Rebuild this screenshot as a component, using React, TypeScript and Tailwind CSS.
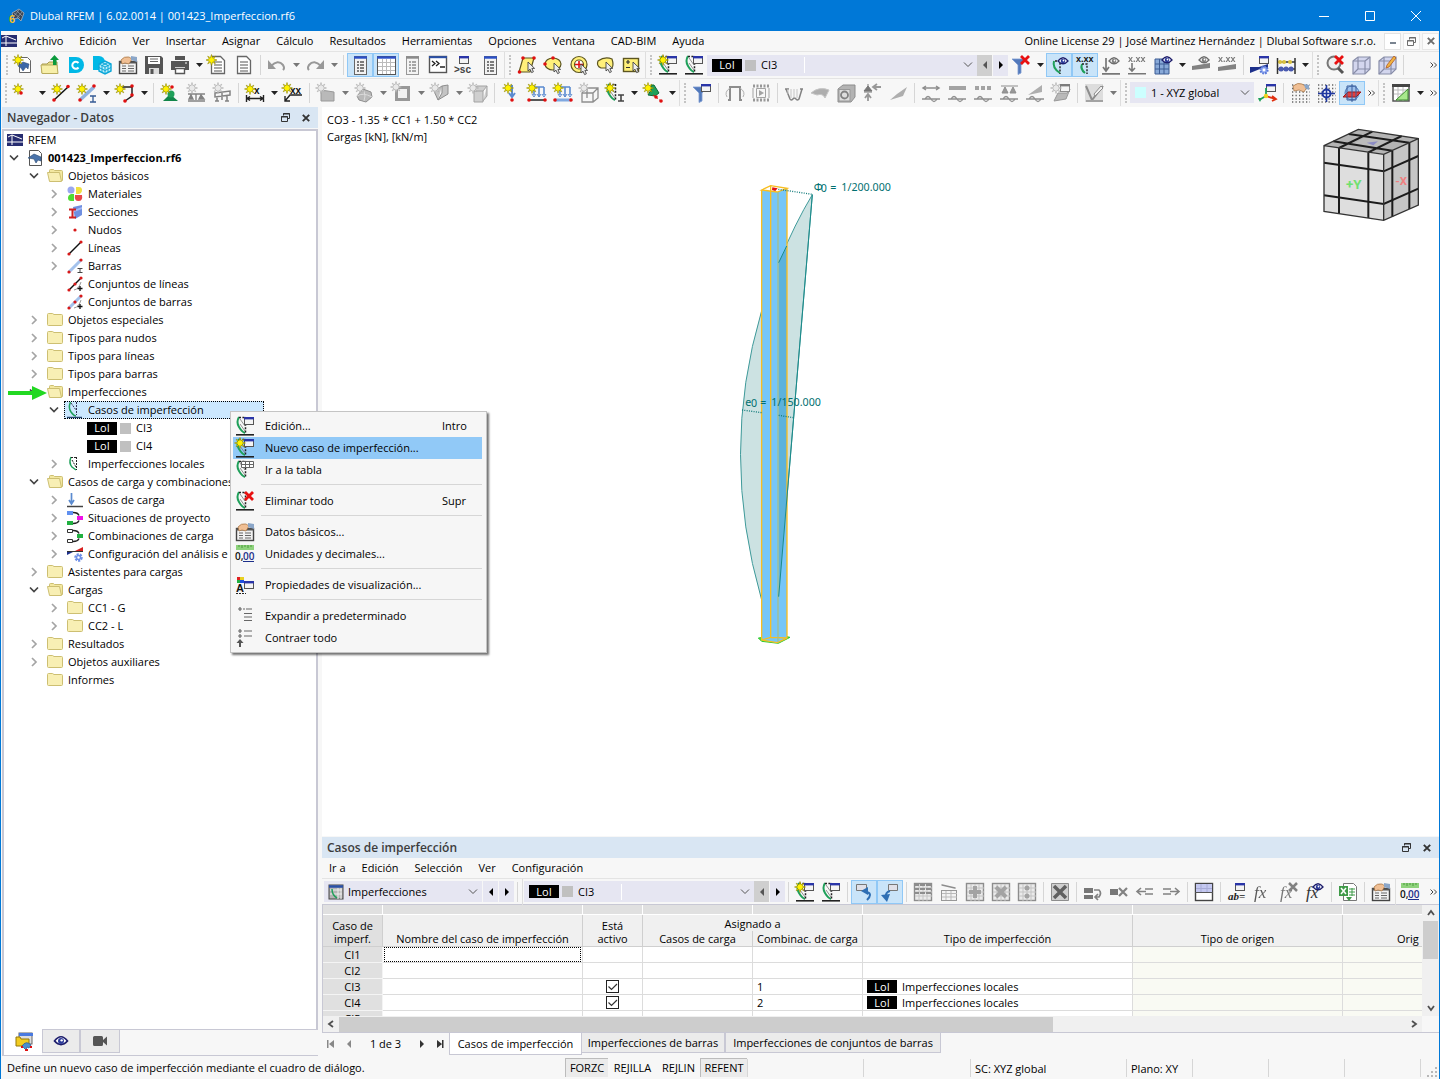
import type { ReactNode } from "react";

/* ---------- Icon parts ---------- */

type Point = { x: number; y: number };

const Star = ({ x, y }: Point) => (
  <path
    transform={`translate(${x} ${y})`}
    d="M0-5.5 1-2.2 3.8-3.8 2.2-1 5.5 0 2.2 1 3.8 3.8 1 2.2 0 5.5-1 2.2-3.8 3.8-2.2 1-5.5 0-2.2-1-3.8-3.8-1-2.2z"
    fill="#fff200"
    stroke="#8f8500"
    strokeWidth=".6"
  />
);

const Win = ({ x, y }: Point) => (
  <g transform={`translate(${x} ${y})`}>
    <rect x=".5" y=".5" width="9" height="7" fill="#f4f4f4" stroke="#555" />
    <path d="M0 1.2h10" stroke="#2a35a8" strokeWidth="2.4" />
  </g>
);

const Dot = ({ x, y }: Point) => <circle cx={x} cy={y} r="1.8" fill="#e01010" />;

const Cursor = ({ x, y }: Point) => (
  <path
    transform={`translate(${x} ${y})`}
    d="M0 0v9l2-1.8 1.6 3.4 1.8-.8L3.9 6.4h2.7z"
    fill="#eee"
    stroke="#444"
    strokeWidth=".9"
  />
);

const Eye = ({ x, y }: Point) => (
  <g transform={`translate(${x} ${y})`}>
    <path d="M-5 0Q0-6.5 5 0 0 5.5-5 0z" fill="#fff" stroke="#1d1d6b" strokeWidth="1.3" />
    <circle r="2.3" fill="#2a3a9a" />
    <circle r=".9" cx=".5" cy="-.5" fill="#fff" />
  </g>
);

const RedX = ({ x, y }: Point) => (
  <path
    transform={`translate(${x} ${y})`}
    d="M-4-4 4 4M4-4-4 4"
    stroke="#e81010"
    strokeWidth="2.8"
    fill="none"
  />
);

const Gear = ({ x, y }: Point) => (
  <g transform={`translate(${x} ${y})`}>
    <circle r="3.6" fill="#8fa8f0" stroke="#5a78d8" strokeWidth="2" strokeDasharray="1.6 1.2" />
    <circle r="1.4" fill="#fff" />
  </g>
);

const bow = (
  <g fill="none">
    <path d="M6 3Q3 8 6 13t6 6" stroke="#1fa05a" strokeWidth="2" />
    <path d="M6 3.5h7M12.5 3v16" stroke="#222" strokeWidth="1.5" strokeDasharray="2 1.4" />
    <path d="M7 5l5 7M7 10l5 7" stroke="#777" strokeWidth=".8" />
  </g>
);
const bowBase = <path d="M3 20.8h18" stroke="#222" strokeWidth="1.6" />;
const sheet = (
  <path d="M5.5 3.5h9l4 4v13h-13z" fill="#fff" stroke="#666" strokeWidth="1.3" />
);
const sheetLines = <path d="M8 9h8M8 12h8M8 15h8M8 18h8" stroke="#555" strokeWidth="1.2" />;
const handCard = (
  <g>
    <rect x="3.5" y="8.5" width="17" height="12" fill="#f2f2f2" stroke="#444" strokeWidth="1.4" />
    <path d="M3 9.5h18" stroke="#555" strokeWidth="2" />
    <path d="M6 13h4M12 13h6M6 15.5h4M12 15.5h6M6 18h4M12 18h6" stroke="#666" />
    <path d="M5 7q3-4 8-3l3 2-3 5-4-1-3 1z" fill="#f0bf94" stroke="#a0703f" strokeWidth=".7" />
    <path d="M15 3l6 1v5l-6-2z" fill="#8ba6c8" />
  </g>
);
const cubeLines = (
  <g strokeWidth="1.2">
    <path d="M4 8l5-4h12v12l-5 5H4z" fill="#d3d6ee" stroke="#888da8" />
    <path d="M4 8h12v13M16 8l5-4M9 4v12l-5 5M9 16h12" fill="none" stroke="#888da8" />
  </g>
);
const dots = (
  <path
    d="M4 4h18M4 7.5h18M4 11h18M4 14.5h18M4 18h18M4 21h18"
    stroke="#666"
    strokeWidth="1.3"
    strokeDasharray="1.3 2.2"
  />
);
const funnel = <path d="M3 6h15l-6 6v8l-3 1.5V12z" fill="#5279bb" stroke="#7c9ad0" strokeWidth=".8" />;
const wave = <path d="M3 18h3q3-5 6 0t6 0h3M3 18h18" fill="none" stroke="#555" strokeWidth="1.3" />;
const undoArrow = (
  <g>
    <path d="M6 13q7-7 12-1 2 3 0 5" fill="none" stroke="#666" strokeWidth="2" />
    <path d="M3 7v9h8z" fill="#666" />
  </g>
);
const fx = (
  <text x="3" y="18" fontFamily="Liberation Serif" fontStyle="italic" fontSize="17" fill="#333">
    fx
  </text>
);
const loadFrame = (
  <g fill="none">
    <path d="M9 6h10M9 6v8M14 6v10M19 6v8" stroke="#5b8bd0" strokeWidth="1.6" />
    <path d="M7 13l2 3 2-3M12 13l2 3 2-3M17 13l2 3 2-3" stroke="#5b8bd0" />
  </g>
);
const cellGrid = (
  <g>
    <rect x="3.5" y="3.5" width="17" height="17" fill="#e4e4e4" stroke="#555" strokeWidth="1.4" />
    <path d="M4 8h17M4 12h17M4 16h17M8 4v17M12 4v17M16 4v17" stroke="#aaa" />
  </g>
);

/* ---------- Toolbar icons, 24 x 24 ---------- */

const icons: Record<string, ReactNode> = {
  newModel: (
    <>
      <path d="M7.5 4.5h8l3 3v12h-11z" fill="#fff" stroke="#666" />
      <path d="M6 13l5-4 6 2-1 5-2-2-3 4-2-3z" fill="#3c68a8" stroke="#28456f" strokeWidth=".5" />
      <Star x={6} y={7} />
    </>
  ),
  open: (
    <>
      <path d="M4 11h5l2-2h8v11H4z" fill="#e8dc8c" stroke="#a89b4e" />
      <path d="M3 12h16l1 8.5H4z" fill="#f7efa9" stroke="#b9ac5c" />
      <path d="M15 12V7h-3l4.5-5L21 7h-2.500v5z" fill="#0a9a3c" />
    </>
  ),
  cloud: (
    <>
      <path d="M5 4h7a8 8 0 010 16H5z" fill="#00b8e6" />
      <path d="M14.5 10a3.5 3.5 0 100 4.500" fill="none" stroke="#fff" strokeWidth="2" />
    </>
  ),
  cloudModel: (
    <>
      <path d="M3 3h6a6 6 0 016 6l-3 8H3z" fill="#00b8e6" />
      <path d="M9 11l6-3 6 3v7l-6 3-6-3z" fill="#bdeefa" stroke="#0aa6d8" strokeWidth="1.4" />
      <path
        d="M9 11l6 3 6-3M15 14v7M12 9.5l6 3M12 19.5v-7l6-3M9 14.5l6 3 6-3M18 12.500v7"
        fill="none"
        stroke="#0aa6d8"
      />
    </>
  ),
  basicData: handCard,
  save: (
    <>
      <path d="M3 3h16l2 2v16H3z" fill="#555" />
      <path d="M6 4h12v7H6z" fill="#fff" />
      <path d="M8 6h8M8 8.500h8" stroke="#666" />
      <path d="M7 15h10v6H7z" fill="#ddd" />
      <path d="M8.500 16h3v5h-3z" fill="#555" />
    </>
  ),
  print: (
    <>
      <path d="M7 3h10v4H7zM3 8h18v9h-4v-3H7v3H3z" fill="#555" />
      <path d="M7.500 15.500h9v5h-9z" fill="#fff" stroke="#555" strokeWidth="1.4" />
      <path d="M17 10h2" stroke="#fff" />
    </>
  ),
  newReport: (
    <>
      {sheet}
      {sheetLines}
      <Star x={5.5} y={7} />
    </>
  ),
  report: (
    <>
      {sheet}
      {sheetLines}
    </>
  ),
  undo: undoArrow,
  redo: <g transform="matrix(-1 0 0 1 24 0)">{undoArrow}</g>,
  navPanel: (
    <>
      <rect x="6.5" y="3.5" width="12" height="18" fill="#f2f2f2" stroke="#666" />
      <path d="M6 4.500h13" stroke="#2a50c8" strokeWidth="2.400" />
      <path
        d="M9 9h2M12 9h4M9 12h2M12 12h4M9 15h2M12 15h4M9 18h2M12 18h4"
        stroke="#555"
        strokeWidth="1.500"
      />
    </>
  ),
  tablePanel: (
    <>
      <rect x="3.5" y="3.5" width="18" height="18" fill="#fff" stroke="#555" />
      <path d="M3 4.500h19" stroke="#2a50c8" strokeWidth="2.400" />
      <path d="M4 9.500h17M4 13.500h17M4 17.500h17M8.500 6v15M12.500 6v15M16.500 6v15" stroke="#bbb" />
    </>
  ),
  console: (
    <>
      <rect x="3.5" y="3.5" width="17" height="16" fill="#fff" stroke="#555" strokeWidth="1.400" />
      <path d="M3 4.200h18" stroke="#2a50a8" strokeWidth="2" />
      <path d="M6 8l3 2.500L6 13M10 8l3 2.500-3 2.500M14 14h5" fill="none" stroke="#222" strokeWidth="1.300" />
    </>
  ),
  script: (
    <>
      <Win x={7} y={3} />
      <text x="2" y="20" fontFamily="Liberation Sans" fontWeight="bold" fontSize="10" fill="#444">
        &gt;sc
      </text>
    </>
  ),
  selPoly: (
    <>
      <path d="M8 5h11l-4 14H4z" fill="#fff07a" stroke="#5c5520" strokeWidth="1.200" />
      <Dot x={8} y={5} />
      <Dot x={19} y={5} />
      <Dot x={4.5} y={19} />
      <Cursor x={13} y={9} />
    </>
  ),
  selEllipse: (
    <>
      <ellipse cx="12" cy="11" rx="8" ry="6" fill="#fff07a" stroke="#5c5520" strokeWidth="1.200" />
      <Dot x={12} y={5} />
      <Dot x={4} y={11} />
      <Cursor x={13} y={10} />
    </>
  ),
  selRing: (
    <>
      <circle cx="12" cy="11.5" r="8" fill="#fff07a" stroke="#5c5520" strokeWidth="1.200" />
      <circle cx="12" cy="11.5" r="4.500" fill="#fff" stroke="#5c5520" strokeWidth="1.200" />
      <path d="M8 11.500h8M12 8v7" stroke="#e01010" strokeWidth="1.600" />
      <Cursor x={14} y={11} />
    </>
  ),
  selLasso: (
    <>
      <path d="M5 8q7-5 14-2 2 6 0 9H8q-5-2-3-7z" fill="#fff07a" stroke="#5c5520" strokeWidth="1.200" />
      <Cursor x={13} y={9} />
    </>
  ),
  selPlus: (
    <>
      <rect x="4.500" y="5.500" width="15" height="13" fill="#fff07a" stroke="#5c5520" strokeWidth="1.400" />
      <path d="M7 9h4M9 7v4M7 14.500h4" stroke="#333" strokeWidth="1.200" />
      <Cursor x={14} y={9} />
    </>
  ),
  newImp: (
    <>
      {bow}
      {bowBase}
      <Win x={11} y={3} />
      <Star x={7} y={7} />
    </>
  ),
  editImp: (
    <>
      {bow}
      {bowBase}
      <Win x={11} y={3} />
    </>
  ),
  tableImp: (
    <>
      {bow}
      <path d="M8.500 3.500h12v6h-12zM8 6.500h12M12.500 3v7M16.500 3v7" fill="#fff" stroke="#666" />
    </>
  ),
  deleteImp: (
    <>
      {bow}
      {bowBase}
      <RedX x={16} y={7} />
    </>
  ),
  filterOff: (
    <>
      {funnel}
      <RedX x={16} y={7} />
    </>
  ),
  filterWin: (
    <>
      {funnel}
      <Win x={11} y={3} />
    </>
  ),
  eyeImp: (
    <>
      <path d="M7 8q-2 7 6 12" fill="none" stroke="#1fa05a" strokeWidth="2" />
      <path d="M8 8h5v13" fill="none" stroke="#222" strokeWidth="1.400" strokeDasharray="2 1.400" />
      <Eye x={16} y={8} />
    </>
  ),
  valuesImp: (
    <>
      <text x="3" y="9" fontFamily="Liberation Sans" fontWeight="bold" fontSize="9" fill="#111">
        x.xx
      </text>
      <path d="M9 11q-2 5 3 9" fill="none" stroke="#1fa05a" strokeWidth="2" />
      <path d="M9 11h5v10" fill="none" stroke="#222" strokeWidth="1.400" strokeDasharray="2 1.400" />
    </>
  ),
  eyeLoad: (
    <>
      <path d="M7 5v12M4 14l3 4 3-4M3 20.800h18" fill="none" stroke="#333" strokeWidth="1.700" />
      <Eye x={15} y={8} />
    </>
  ),
  valuesLoad: (
    <>
      <text x="3" y="9" fontFamily="Liberation Sans" fontWeight="bold" fontSize="9" fill="#333">
        x.xx
      </text>
      <path d="M7 10v8M4 15l3 3 3-3M3 20.800h18" fill="none" stroke="#333" strokeWidth="1.600" />
    </>
  ),
  eyeGrid: (
    <>
      <path d="M4 6h14v15H4z" fill="#88a9d8" stroke="#3c5c94" />
      <path d="M4 11h14M4 16h14M8.500 6v15M13 6v15" stroke="#3c5c94" />
      <Eye x={16} y={7} />
    </>
  ),
  eyeResult: (
    <>
      <path d="M3 13v4l18-2v-5z" fill="#444" />
      <Eye x={15} y={7} />
    </>
  ),
  valuesResult: (
    <>
      <text x="3" y="9" fontFamily="Liberation Sans" fontWeight="bold" fontSize="9" fill="#333">
        x.xx
      </text>
      <path d="M3 14v4l18-2v-5z" fill="#444" />
    </>
  ),
  analysis: (
    <>
      <path d="M2 14h9l9-3v4l-8 1-10 4z" fill="#1c2f8a" />
      <Win x={11} y={3} />
      <Gear x={16} y={17} />
    </>
  ),
  abacus: (
    <>
      <path d="M3.500 5v16M21 5v16M3 9h18M3 16h18" stroke="#333" strokeWidth="1.500" />
      <path d="M6 9h.1M10 9h.1M16 9h.1" stroke="#d8c040" strokeWidth="4" strokeLinecap="round" />
      <path d="M7 16h.1M12 16h.1M17 16h.1" stroke="#4a5ab0" strokeWidth="5" strokeLinecap="round" />
    </>
  ),
  zoomOff: (
    <>
      <circle cx="11" cy="10" r="6.500" fill="#eee" stroke="#777" strokeWidth="2" />
      <path d="M15 15l5 5" stroke="#555" strokeWidth="3" />
      <RedX x={16} y={7} />
    </>
  ),
  cube: cubeLines,
  cubeEdit: (
    <>
      {cubeLines}
      <path d="M12 12l7-9 2 2-7 9-3 1z" fill="#f0b440" stroke="#b05a28" strokeWidth=".8" />
    </>
  ),
  node: (
    <>
      <Star x={7} y={8} />
      <Dot x={10} y={12} />
    </>
  ),
  line: (
    <>
      <path d="M5 19L19 6" stroke="#111" strokeWidth="1.500" />
      <Dot x={5} y={19} />
      <Dot x={19} y={5.5} />
      <Star x={8} y={8} />
    </>
  ),
  member: (
    <>
      <path d="M5 19L19 6" stroke="#8fb2e0" strokeWidth="3.500" />
      <Dot x={5} y={19} />
      <Dot x={19} y={5} />
      <path d="M15 15h6M18 15v6M15 21h6" stroke="#345a94" strokeWidth="1.300" />
      <Star x={7} y={8} />
    </>
  ),
  lineSet: (
    <>
      <path d="M9 6h10v9L12 20" fill="none" stroke="#222" strokeWidth="1.500" />
      <Dot x={19} y={5} />
      <Dot x={19} y={14} />
      <Dot x={12} y={20} />
      <Star x={7} y={8} />
    </>
  ),
  support: (
    <>
      <path d="M5 20l7-7 8 7z" fill="#12864a" />
      <circle cx="13" cy="13" r="3.500" fill="#1fa05a" />
      <Dot x={14} y={6} />
      <Star x={8} y={8} />
    </>
  ),
  lineSupport: (
    <>
      <path
        d="M4 13h17M7 14l-2 4h4zM17 14l-2 4h5zM12 13v6M4 20h17"
        fill="#444"
        stroke="#444"
        strokeWidth="1.400"
      />
      <Star x={8} y={7} />
    </>
  ),
  hinge: (
    <>
      <path
        d="M5 12l15-2v4L5 16zM7 15v5M17 14v6M5 20h4M15 20h4M12 12v7"
        fill="none"
        stroke="#444"
        strokeWidth="1.500"
      />
      <Star x={8} y={7} />
    </>
  ),
  dimX: (
    <>
      <path
        d="M3.500 14v7M20.500 14v7M4 17.500h16M7 15.500l-3 2 3 2M17 15.500l3 2-3 2"
        fill="none"
        stroke="#222"
        strokeWidth="1.400"
      />
      <text x="11" y="13" fontFamily="Liberation Sans" fontWeight="bold" fontSize="10" fill="#111">
        x
      </text>
      <Star x={7} y={8} />
    </>
  ),
  dimXX: (
    <>
      <path d="M4 20l5-6h12M4 15v5h5" fill="none" stroke="#222" strokeWidth="1.400" />
      <text x="9" y="13" fontFamily="Liberation Sans" fontWeight="bold" fontSize="10" fill="#111">
        xx
      </text>
      <Star x={6} y={7} />
    </>
  ),
  surface: (
    <>
      <path d="M7 9l13 2v9H7z" fill="#999" stroke="#666" />
      <Star x={7} y={7} />
    </>
  ),
  shell: (
    <>
      <path d="M5 15l6-7 8 3 1 5-6 5-7-2z" fill="#999" stroke="#555" />
      <path d="M5 15q6-4 15 1M12 10q2 5 0 10" fill="none" stroke="#ccc" />
      <Star x={8} y={7} />
    </>
  ),
  opening: (
    <>
      <path d="M6.500 6.500h12v12h-12z" fill="#eee" stroke="#666" strokeWidth="3" />
      <Star x={6} y={6} />
    </>
  ),
  solid: (
    <>
      <path d="M6 10l4 9 4-7V5zM14 5l6-1v9l-10 6" fill="#aaa" stroke="#555" />
      <Star x={7} y={7} />
    </>
  ),
  solidBox: (
    <>
      <path d="M8 10h9v11H8zM8 10l3-5h10l-4 5M21 5v10l-4 5" fill="#bbb" stroke="#777" />
      <Star x={7} y={7} />
    </>
  ),
  nodalLoad: (
    <>
      <path d="M13 4v11M10 12l3 4 3-4" fill="none" stroke="#5b8bd0" strokeWidth="2" />
      <Dot x={13} y={19} />
      <Star x={9} y={7} />
    </>
  ),
  lineLoad: (
    <>
      {loadFrame}
      <path d="M4 19h16" stroke="#222" strokeWidth="1.500" />
      <Dot x={4} y={19} />
      <Dot x={20} y={19} />
      <Star x={7} y={7} />
    </>
  ),
  memberLoad: (
    <>
      {loadFrame}
      <path d="M4 19h16" stroke="#7fa8e0" strokeWidth="3" />
      <Dot x={4} y={19} />
      <Dot x={20} y={19} />
      <Star x={7} y={7} />
    </>
  ),
  freeLoad: (
    <>
      <path
        d="M5 12l5-5h11v10l-5 4H5zM5 12h11v9M16 12l5-5M10 7v10"
        fill="none"
        stroke="#555"
        strokeWidth="1.300"
      />
      <Star x={7} y={7} />
    </>
  ),
  memberImp: (
    <>
      {bow}
      <path d="M15 14h6M18 14v6M15 20h6" stroke="#444" strokeWidth="1.600" />
      <Star x={7} y={7} />
    </>
  ),
  guide: (
    <>
      <path d="M10 4l3 0 5 8-4 3-7-1 3-5z" fill="#1fa05a" stroke="#0e6a38" />
      <path d="M12 14l8 6" stroke="#e01010" strokeDasharray="2 2" />
      <Dot x={15} y={16} />
      <Dot x={20} y={20} />
      <Star x={7} y={7} />
    </>
  ),
  portal: (
    <>
      <path d="M7 19V6h10v13M5 19h3M16 19h3" fill="none" stroke="#555" strokeWidth="2" />
      <path d="M7 7q-6 4-3 9M17 7q6 4 3 9" fill="none" stroke="#888" />
    </>
  ),
  film: (
    <>
      <path d="M4 5h17M4 19h17" stroke="#666" strokeWidth="3" strokeDasharray="2 1.500" />
      <path d="M7.500 7.500h9v9h-9zM4 7v10M20 7v10" fill="none" stroke="#777" />
      <path d="M10 9l5 3-5 3z" fill="#777" />
    </>
  ),
  moment: (
    <>
      <path d="M3 8h4M18 8h3M4 8l4 10q1 2 3 0 1-2 3 0 1 2 3 0l3-10" fill="none" stroke="#444" strokeWidth="1.500" />
      <path d="M6 8v5M9 8v9M12 8v9M15 8v9" stroke="#aaa" />
    </>
  ),
  contour: <path d="M3 12q8-7 18-3l-4 8q-2-5-8-3z" fill="#888" stroke="#aaa" />,
  cubeRes: (
    <>
      <path d="M4 8l5-4h12v12l-4 5H4z" fill="#909090" stroke="#555" />
      <path d="M5 8.500h11V20H5z" fill="#d2d2d2" stroke="#666" />
      <circle cx="10.500" cy="14" r="3.500" fill="none" stroke="#444" strokeWidth="1.800" />
    </>
  ),
  reaction: (
    <>
      <path d="M4 10l4-5 4 5zM8 3v3M4 11h8" fill="#333" stroke="#333" />
      <path d="M8 20v-6M5 17l3-4 3 4M21 6h-7M17 3l-4 3 4 3" fill="none" stroke="#666" strokeWidth="1.800" />
    </>
  ),
  ramp: <path d="M4 19l7-6 10-7-4 9z" fill="#888" />,
  result1: (
    <>
      <path d="M4 7h16M7 5L4 7l3 2M17 5l3 2-3 2" fill="none" stroke="#555" strokeWidth="1.500" />
      {wave}
    </>
  ),
  result2: (
    <>
      <path d="M4 7h17" stroke="#777" strokeWidth="4" />
      {wave}
    </>
  ),
  result3: (
    <>
      <path d="M4 7h17" stroke="#777" strokeWidth="4" strokeDasharray="4 2" />
      {wave}
    </>
  ),
  result4: (
    <>
      <path d="M4 5h17M5 12l3-6 3 6zM13 12l3-6 3 6z" fill="#666" stroke="#555" />
      {wave}
    </>
  ),
  result5: (
    <>
      <path d="M5 14L19 4v7z" fill="#888" />
      {wave}
    </>
  ),
  result6: (
    <>
      <path d="M5 20l4-8h9l3-4-4 10z" fill="#999" stroke="#666" />
      <Win x={11} y={3} />
      <Star x={7} y={7} />
    </>
  ),
  design: (
    <>
      <path d="M3 3h18v18H3z" fill="#d0d0d0" />
      <path d="M4 5l6 14L21 5" fill="none" stroke="#555" strokeWidth="2" />
      <path d="M12 13l7-8 2 2-8 8z" fill="#eee" stroke="#555" />
      <path d="M4 20h17" stroke="#777" strokeWidth="2" />
    </>
  ),
  axes: (
    <>
      <Win x={11} y={3} />
      <path d="M11 7v8l-7 4" fill="none" stroke="#1fa05a" strokeWidth="1.800" />
      <path d="M11 15l9 3M17 15l4 3-4 2" fill="none" stroke="#e03010" strokeWidth="1.800" />
      <path d="M3 17l4 0-2 4z" fill="#1fa05a" />
      <circle cx="11" cy="15" r="2.200" fill="#f0d020" />
    </>
  ),
  gridHand: (
    <>
      {dots}
      <path d="M5 5q5-4 9-2l5 3-3 5-5-2-5 1z" fill="#f0bf94" stroke="#a0703f" strokeWidth=".7" />
      <path d="M16 3l5 1v5l-4-2z" fill="#8ba6c8" />
    </>
  ),
  gridSnap: (
    <>
      {dots}
      <circle cx="12.500" cy="12.500" r="4" fill="#fff" stroke="#2038a0" strokeWidth="2" />
      <path d="M12.500 4v17M4 12.500h17" stroke="#2038a0" strokeWidth="1.600" />
    </>
  ),
  workPlane: (
    <>
      <circle cx="12" cy="12" r="7" fill="#9cc0ec" stroke="#4a78b8" />
      <path d="M3 16l5-5h13l-5 5z" fill="#e04040" stroke="#a01818" />
      <path d="M12 3v18M7 5h9v14H7z" fill="none" stroke="#3a5f9c" />
    </>
  ),
  ruler: (
    <>
      <rect x="4" y="4" width="16" height="16" fill="#fff" stroke="#555" strokeWidth="1.500" />
      <path d="M3 4.500h18" stroke="#444" strokeWidth="3" />
      <path d="M5 9h14M5 13h14M9 6v14M14 6v14" stroke="#bbb" />
      <path d="M19 8v11H7z" fill="#a8e88c" stroke="#3f8a30" />
    </>
  ),
  syncIn: (
    <>
      <path d="M4.500 4.500h10v6h-10z" fill="#e0e0e8" stroke="#777" />
      <path d="M15 20q6-6 0-8l-2-1" fill="none" stroke="#2f6fb4" strokeWidth="2" />
      <path d="M9 11l7-4v8z" fill="#2f6fb4" />
    </>
  ),
  syncOut: (
    <>
      <path d="M10.500 4.500h9v6h-9z" fill="#e0e0e8" stroke="#777" />
      <path d="M12 11q-5 1-4 7" fill="none" stroke="#2f6fb4" strokeWidth="2" />
      <path d="M3 15l9-1-3 8z" fill="#2f6fb4" />
    </>
  ),
  tblHeader: (
    <>
      {cellGrid}
      <path d="M3 5h18M3 9h18M3 13h18" stroke="#555" strokeWidth="2" strokeDasharray="5 1" />
    </>
  ),
  tblGraph: (
    <>
      <rect x="4.500" y="10.500" width="15" height="10" fill="#f2f2f2" stroke="#666" />
      <path d="M5 13.500h15M9 11v9M14 11v9M5 17h15" stroke="#999" />
      <path d="M5 5l13 3M5 5h.1M18 8h.1" stroke="#555" strokeLinecap="round" strokeWidth="1.500" />
    </>
  ),
  tblPlus: (
    <>
      {cellGrid}
      <path d="M12 6v12M6 12h12" stroke="#777" strokeWidth="4" />
    </>
  ),
  tblCross: (
    <>
      {cellGrid}
      <path d="M7 7l10 10M17 7L7 17" stroke="#777" strokeWidth="4" />
    </>
  ),
  tblDots: (
    <>
      {cellGrid}
      <circle cx="12" cy="8" r="2.500" fill="#777" />
      <circle cx="12" cy="16" r="2.500" fill="#777" />
    </>
  ),
  tblClear: (
    <>
      <path d="M3.500 3.500h17v17h-17z" fill="#bbb" stroke="#555" />
      <path d="M6 6l12 12M18 6L6 18" stroke="#111" strokeWidth="3.500" />
    </>
  ),
  rowInsert: (
    <>
      <path d="M3 8h9v5H3zM3 15h9v4H3z" fill="#333" />
      <path d="M13 10h5q3 3 0 7h-4M17 14l-3 3 3 3" fill="none" stroke="#444" strokeWidth="1.700" />
    </>
  ),
  rowDelete: (
    <>
      <path d="M3 9h8v6H3z" fill="#333" />
      <path d="M12 8l8 8M20 8l-8 8" stroke="#444" strokeWidth="2.200" />
    </>
  ),
  rowLeft: (
    <path d="M20 9h-8M20 14h-8M13 11.500H4M8 8l-4 3.500L8 15" fill="none" stroke="#444" strokeWidth="1.600" />
  ),
  rowRight: (
    <path d="M4 9h8M4 14h8M11 11.500h9M16 8l4 3.500-4 3.500" fill="none" stroke="#444" strokeWidth="1.600" />
  ),
  split: (
    <>
      <rect x="3.500" y="3.500" width="17" height="17" fill="#fff" stroke="#444" strokeWidth="1.400" />
      <path d="M4 4h16v8H4z" fill="#c4c8f0" />
      <path d="M4 8.500h16M9 4v8M15 4v8" stroke="#a8acd8" />
      <path d="M3 12.500h18" stroke="#555" />
    </>
  ),
  abEq: (
    <>
      <Win x={10} y={3} />
      <text x="3" y="20" fontFamily="Liberation Serif" fontStyle="italic" fontWeight="bold" fontSize="11" fill="#222">
        ab=
      </text>
    </>
  ),
  fx: <g opacity=".8">{fx}</g>,
  fxOff: (
    <>
      {fx}
      <path d="M12 3l8 8M20 3l-8 8" stroke="#444" strokeWidth="2.500" />
    </>
  ),
  fxEye: (
    <>
      {fx}
      <Eye x={15} y={7} />
    </>
  ),
  excel: (
    <>
      <path d="M7.500 3.500h10l3 3v14h-13z" fill="#fff" stroke="#777" />
      <path d="M3 6h9v10H3z" fill="#3f9a48" />
      <path d="M5 8l5 6M10 8l-5 6" stroke="#fff" strokeWidth="1.500" />
      <path d="M13 9h6M13 12h6M13 15h6M16 8v8" stroke="#3f9a48" />
      <path d="M10 17h6l-3 4z" fill="#3f9a48" />
    </>
  ),
  units: (
    <>
      <path d="M3 3h18v5H3z" fill="#8ed27c" />
      <path d="M6 3v2M9 3v3M12 3v2M15 3v3M18 3v2" stroke="#4b9a3c" />
      <text x="2" y="18" fontFamily="Open Sans" fontWeight="600" fontSize="10" fill="#111">
        0,
      </text>
      <text x="10" y="18" fontFamily="Open Sans" fontWeight="600" fontSize="10" fill="#1c2f8a">
        00
      </text>
      <path d="M10 19.500h11" stroke="#1c2f8a" />
    </>
  ),
  display: (
    <>
      <path d="M4 4h3v3H4z" fill="#e02020" />
      <path d="M7 4h4v3H7z" fill="#e8d020" />
      <path d="M4 7h3v3H4z" fill="#20b040" />
      <path d="M7 7h4v3H7z" fill="#2050e0" />
      <text x="3" y="19" fontFamily="Liberation Sans" fontWeight="bold" fontSize="11" fill="#111">
        A
      </text>
      <path d="M3 20.500h10" stroke="#222" strokeDasharray="2 1" />
      <Win x={11} y={8} />
    </>
  ),
  expand: (
    <path d="M10 5h2M13 5h6M5 5h4M7 3v4M11 9.500h8M11 13h8M11 16.500h8" fill="none" stroke="#666" strokeWidth="1.200" />
  ),
  collapse: (
    <>
      <path d="M5 5h4M7 3v4M5 10h4M11 5h8M11 10h8M7 8v4" stroke="#666" strokeWidth="1.200" />
      <path d="M7 13l3.500 4H8v4H6v-4H3.500z" fill="#555" />
    </>
  ),
  impTable: (
    <>
      <rect x="5" y="5" width="14" height="14" fill="#b4b4b4" stroke="#444" />
      <path d="M5 6.500h14" stroke="#2a50a8" strokeWidth="2.500" />
      <path d="M6 10h12M6 14h12M14 8v11M17 8v11" stroke="#eee" />
      <path d="M8 9q0 6 5 9" stroke="#1fa05a" strokeWidth="1.500" fill="none" />
    </>
  ),
  models: (
    <>
      <rect x="8" y="3" width="13" height="11" fill="#ddd" stroke="#666" />
      <path d="M8 4.500h14" stroke="#4a7ae0" strokeWidth="3" />
      <path d="M5 7h4l1 2h8v7H5z" fill="#f2cc20" stroke="#94780a" />
      <path d="M11 16q4-6 9-1l-2 3-2-1-1 3z" fill="#4a8fd0" stroke="#2a5f98" strokeWidth=".8" />
      <path d="M10 17h2M14 20h3M19 17h2" stroke="#e01010" strokeWidth="2" />
    </>
  ),
  eye: (
    <g transform="translate(-3.600 -3.600) scale(1.300)">
      <Eye x={12} y={12} />
    </g>
  ),
  camera: (
    <path
      d="M5 8.500q0-1.500 1.500-1.500h7q1.500 0 1.500 1.500V11l4-3.500v9L15 13v2.500q0 1.500-1.500 1.500h-7Q5 17 5 15.500z"
      fill="#555"
    />
  ),
};

const Icon = ({ name, gray = false }: { name: string; gray?: boolean }) => (
  <svg
    viewBox="0 0 24 24"
    aria-hidden="true"
    className={gray ? "size-6 shrink-0 grayscale opacity-65" : "size-6 shrink-0"}
  >
    {icons[name]}
  </svg>
);

/* ---------- Tree icons, 16 x 16 ---------- */

const TDot = ({ x, y }: Point) => <circle cx={x} cy={y} r="1.6" fill="#d81818" />;

const treeIcons: Record<string, ReactNode> = {
  brand: (
    <>
      <path d="M0 2h16v12H0z" fill="#262c70" />
      <path d="M0 10h16M5 3v10M1 5l4-2 10 4" fill="none" stroke="#fff" />
    </>
  ),
  model: (
    <>
      <path d="M2.500.5h9l3 3v12h-12z" fill="#fff" stroke="#555" />
      <path d="M1 8l6-4 7 3v4l-3-1-2 3-2-4z" fill="#4a74ac" stroke="#29486f" strokeWidth=".6" />
    </>
  ),
  folder: (
    <path
      d="M.5 2.500q0-1 1-1h4l1.500 1h7.500q1 0 1 1v9q0 1-1 1h-13q-1 0-1-1z"
      fill="#f8efb4"
      stroke="#cdbf72"
    />
  ),
  folderOpen: (
    <>
      <path d="M2.500 2.500q0-1 1-1h3l1 1h7q1 0 1 1v9h-13z" fill="#f3e8a0" stroke="#cdbf72" />
      <path d="M.5 4.500h12l2 9h-12z" fill="#f8efb4" stroke="#cdbf72" />
    </>
  ),
  materials: (
    <>
      <circle cx="4" cy="4" r="3.500" fill="#9aa8f0" />
      <path d="M9 1h3q3 0 3 3t-3 4H9z" fill="#f0e040" />
      <path d="M7 15H4q-3 0-3-3t3-4h3z" fill="#4fdc30" />
      <path d="M8 9h7q1 6-3.500 6T8 9z" fill="#e84848" />
    </>
  ),
  sections: (
    <>
      <path d="M6 3l9-2v10l-7 4z" fill="#6f8fe0" />
      <path d="M7 6l8-3v2L7 8z" fill="#a4b8f4" />
      <path d="M2 5.500h7M5.500 5v9M2 13.500h7" stroke="#d02020" strokeWidth="2" />
    </>
  ),
  node: <TDot x={8} y={8} />,
  line: (
    <>
      <path d="M2 14L14 2" stroke="#111" strokeWidth="1.400" />
      <TDot x={2} y={14} />
      <TDot x={14} y={2} />
    </>
  ),
  member: (
    <>
      <path d="M2 14L14 2" stroke="#a4c2ec" strokeWidth="3" />
      <TDot x={2} y={14} />
      <TDot x={14} y={2} />
      <path d="M10.500 10.500h5M13 10v5M10.500 14.500h5" stroke="#444" />
    </>
  ),
  lineSet: (
    <>
      <path d="M2 14L14 2" stroke="#111" strokeWidth="1.400" />
      <path d="M7 14q5-1 7-8" fill="none" stroke="#999" />
      <TDot x={2} y={14} />
      <TDot x={8} y={8} />
      <TDot x={14} y={2} />
      <path d="M10.500 12.500h5M13 10v5" stroke="#111" strokeWidth="1.300" />
    </>
  ),
  memberSet: (
    <>
      <path d="M2 14L14 2" stroke="#a4c2ec" strokeWidth="3" />
      <path d="M7 14q5-1 7-8" fill="none" stroke="#999" />
      <TDot x={2} y={14} />
      <TDot x={8} y={8} />
      <TDot x={14} y={2} />
      <path d="M10.500 12.500h5M13 10v5" stroke="#111" strokeWidth="1.300" />
    </>
  ),
  impCase: (
    <>
      <path d="M3.500 0Q1 6 4 10t5 4" fill="none" stroke="#1fa05a" strokeWidth="1.500" />
      <path d="M4 1l5 7M9.500 0v13" stroke="#335" strokeDasharray="2 1" />
      <path d="M0 15.500h15" stroke="#26466e" strokeWidth="1.500" />
    </>
  ),
  impLocal: (
    <>
      <path d="M4 1Q1.500 7 5 11l4 3" fill="none" stroke="#1fa05a" strokeWidth="1.500" />
      <path d="M4 1.500h6M9.500 1v13M5 4l4 7" fill="none" stroke="#222" strokeDasharray="2 1" />
    </>
  ),
  load: (
    <>
      <path d="M4.500 1v10M2 8l2.500 4L7 8" fill="none" stroke="#5b8bd0" strokeWidth="1.700" />
      <path d="M0 14.500h16" stroke="#444" strokeWidth="1.500" />
    </>
  ),
  situation: (
    <>
      <path d="M0 1h6v4H0z" fill="#6090f0" />
      <path d="M0 11h6v4H0z" fill="#20b040" />
      <path d="M10 6h6v4h-6z" fill="#f010e8" />
      <path d="M6 2.500q5 0 6 3M6 13.500q5 0 6-3" fill="none" stroke="#222" strokeWidth="1.400" />
    </>
  ),
  combination: (
    <>
      <path d="M.5 1.500h5v3h-5zM.5 11.500h5v3h-5z" fill="#fff" stroke="#333" />
      <path d="M10 6h6v4h-6z" fill="#20b040" />
      <path d="M6 2.500q5 0 6 3M6 13.500q5 0 6-3" fill="none" stroke="#222" strokeWidth="1.400" />
    </>
  ),
  config: (
    <>
      <path d="M0 5h8l-8 4z" fill="#1c2f8a" />
      <path d="M8 5l8-4v4z" fill="#d82020" />
      <path d="M0 5.500h16" stroke="#333" />
      <circle cx="11.500" cy="11.500" r="3" fill="#fff" stroke="#6f90e8" strokeWidth="2.500" strokeDasharray="2 1" />
      <circle cx="11.500" cy="11.500" r="2" fill="none" stroke="#6f90e8" strokeWidth="1.500" />
    </>
  ),
};

const TreeIcon = ({ name }: { name: string }) => (
  <svg viewBox="0 0 16 16" className="size-4 shrink-0" aria-hidden="true">
    {treeIcons[name]}
  </svg>
);

/* ---------- Small shared pieces ---------- */

const Caret = ({ gray = false }: { gray?: boolean }) => (
  <button type="button" aria-label="Más" className="flex w-3 shrink-0 justify-center">
    <svg viewBox="0 0 7 4" className="h-1 w-[7px]">
      <path d="M0 0h7L3.500 4z" fill={gray ? "#777" : "#222"} />
    </svg>
  </button>
);

const Chevron = () => (
  <svg viewBox="0 0 10 6" className="pointer-events-none mx-1 h-1.5 w-2.5 shrink-0">
    <path d="M1 .5l4 4 4-4" fill="none" stroke="#555" />
  </svg>
);

const Grip = () => (
  <span className="flex w-2 shrink-0 justify-center">
    <span className="h-5 border-l-2 border-dotted border-[#c4c4c4]" />
  </span>
);

const Sep = () => (
  <span className="flex w-[7px] shrink-0 justify-center">
    <span className="h-5 w-px bg-[#d6d6d6]" />
  </span>
);

const Edge = () => (
  <span className="flex w-[3px] shrink-0 justify-center">
    <span className="h-[26px] w-px bg-[#dedede]" />
  </span>
);

const Tool = ({ name, gray, active }: { name: string; gray?: boolean; active?: boolean }) => (
  <button
    type="button"
    aria-label={name}
    className={
      active
        ? "flex h-6 w-[26px] shrink-0 items-center justify-center border border-[#90c8f6] bg-[#c9e4f9]"
        : "flex h-6 w-[26px] shrink-0 items-center justify-center"
    }
  >
    <Icon name={name} gray={gray} />
  </button>
);

/* "-" separator, "|" toolbar edge, "::" grip, "^" drop-down arrow; "~" is disabled, "*" is pressed */
const Tools = ({ items }: { items: string }) => (
  <>
    {items.split(" ").map((item, i) => {
      if (item === "-") return <Sep key={i} />;
      if (item === "|") return <Edge key={i} />;
      if (item === "::") return <Grip key={i} />;
      if (item === "^") return <Caret key={i} />;
      if (item === "~^") return <Caret key={i} gray />;
      return (
        <Tool
          key={i}
          name={item.replace(/[~*]/, "")}
          gray={item.startsWith("~")}
          active={item.startsWith("*")}
        />
      );
    })}
  </>
);

const More = () => (
  <button type="button" aria-label="Mostrar más" className="flex w-3 shrink-0 justify-center">
    <svg viewBox="0 0 7 6" className="h-1.5 w-[7px]">
      <path d="M.5.5L3 3 .5 5.500M4 .5L6.500 3 4 5.500" fill="none" stroke="#444" />
    </svg>
  </button>
);

const Arrow = ({ dir, disabled = false }: { dir: "left" | "right"; disabled?: boolean }) => (
  <button
    type="button"
    aria-label={dir === "left" ? "Anterior" : "Siguiente"}
    className={
      disabled
        ? "flex h-[21px] w-[15px] shrink-0 items-center justify-center bg-[#cfcfcf]"
        : "flex h-[21px] w-[15px] shrink-0 items-center justify-center bg-[#e6e6f2]"
    }
  >
    <svg viewBox="0 0 4 8" className="h-2 w-1">
      <path d={dir === "left" ? "M4 0v8L0 4z" : "M0 0v8l4-4z"} fill={disabled ? "#555" : "#000"} />
    </svg>
  </button>
);

const Badge = () => (
  <span className="flex h-[13px] w-[30px] shrink-0 items-center justify-center bg-black text-white">
    LoI
  </span>
);

const Swatch = () => <span className="size-[11px] shrink-0 bg-[#c0c0c0]" />;

const FloatIcon = () => (
  <svg viewBox="0 0 9 9" className="size-[9px]">
    <path d="M2.500 2.500v-2h6v5h-2M2 1h7" fill="none" stroke="#333" />
    <path d="M.5 3.500h6v5h-6zM0 4h7" fill="none" stroke="#333" />
  </svg>
);

const CloseIcon = () => (
  <svg viewBox="0 0 8 8" className="size-2">
    <path d="M.8.8l6.400 6.400M7.200.8L.8 7.200" stroke="#333" strokeWidth="1.900" />
  </svg>
);

const PanelHeader = ({ title }: { title: string }) => (
  <header className="flex h-[21px] shrink-0 items-center bg-[#d9e6f3] pl-[5px] pr-2 text-xs font-semibold text-[#3c3c3c]">
    <h2 className="flex-1">{title}</h2>
    <button type="button" aria-label="Desacoplar" className="flex w-2.5 justify-center">
      <FloatIcon />
    </button>
    <button type="button" aria-label="Cerrar" className="flex w-5 justify-end">
      <CloseIcon />
    </button>
  </header>
);

/* ---------- Title, menu and toolbars ---------- */

const menus = [
  "Archivo", "Edición", "Ver", "Insertar", "Asignar", "Cálculo",
  "Resultados", "Herramientas", "Opciones", "Ventana", "CAD-BIM", "Ayuda",
];

const TitleBar = () => (
  <header className="flex h-[31px] shrink-0 items-center bg-[#0078d7] pl-2 text-white">
    <svg viewBox="0 0 16 16" className="mr-[5px] size-4">
      <path d="M3 5l7-4 5 4-3 8-3-3-4 1z" fill="#3c4654" stroke="#a8b4c0" strokeWidth=".8" />
      <path d="M5 5l6 5M8 3l5 5M5 8l5-6M8 10l5-6" stroke="#a8b4c0" strokeWidth=".6" />
      <text x="0" y="15" fontFamily="Liberation Sans" fontWeight="bold" fontSize="11" fill="#f4c020">
        6
      </text>
    </svg>
    <h1 className="flex-1">Dlubal RFEM | 6.02.0014 | 001423_Imperfeccion.rf6</h1>
    <button type="button" aria-label="Minimizar" className="flex w-[46px] justify-center">
      <svg viewBox="0 0 10 10" className="size-2.5"><path d="M0 5.500h10" stroke="#fff" /></svg>
    </button>
    <button type="button" aria-label="Maximizar" className="flex w-[46px] justify-center">
      <svg viewBox="0 0 10 10" className="size-2.5"><path d="M.5.5h9v9h-9z" fill="none" stroke="#fff" /></svg>
    </button>
    <button type="button" aria-label="Cerrar" className="flex w-[46px] justify-center">
      <svg viewBox="0 0 10 10" className="size-2.5"><path d="M0 0l10 10M10 0L0 10" stroke="#fff" /></svg>
    </button>
  </header>
);

const MenuBar = () => (
  <div className="flex h-5 shrink-0 items-center">
    <TreeIcon name="brand" />
    <nav className="flex flex-1 gap-4 pl-2">
      {menus.map((menu) => (
        <button type="button" key={menu}>{menu}</button>
      ))}
    </nav>
    <span className="pr-2">Online License 29 | José Martinez Hernández | Dlubal Software s.r.o.</span>
    <div className="flex gap-0.5">
      <button
        type="button"
        aria-label="Minimizar documento"
        className="flex size-[17px] items-center justify-center border border-[#e2e2e2] bg-white"
      >
        <svg viewBox="0 0 6 6" className="size-1.5"><path d="M0 5h6" stroke="#7a8490" strokeWidth="2" /></svg>
      </button>
      <button
        type="button"
        aria-label="Restaurar documento"
        className="flex size-[17px] items-center justify-center border border-[#e2e2e2] bg-white opacity-70"
      >
        <FloatIcon />
      </button>
      <button
        type="button"
        aria-label="Cerrar documento"
        className="flex size-[17px] items-center justify-center border border-[#e2e2e2] bg-white opacity-70"
      >
        <CloseIcon />
      </button>
    </div>
  </div>
);

const CaseSelect = () => (
  <label className="flex h-[21px] min-w-0 flex-1 items-center bg-[#e6e6f2] pl-[5px]">
    <Badge />
    <span className="w-[3px] shrink-0" />
    <Swatch />
    <select
      aria-label="Caso de imperfección"
      className="ml-[5px] w-11 appearance-none border-r border-white bg-transparent outline-none"
    >
      <option>CI3</option>
      <option>CI4</option>
    </select>
    <span className="flex-1" />
    <Chevron />
  </label>
);

const Toolbars = () => (
  <div className="shrink-0 pb-px">
    <div className="flex h-[27px] items-center border-t border-[#e4e4e4] pl-0.5">
      <Tools items=":: newModel open cloud cloudModel basicData save print ^ newReport report - ~undo ~^ ~redo ~^ - *navPanel *tablePanel ~navPanel console script navPanel | :: selPoly selEllipse selRing selLasso selPlus | :: newImp editImp" />
      <CaseSelect />
      <Arrow dir="left" disabled />
      <span className="w-px" />
      <Arrow dir="right" />
      <Tools items="filterOff ^ *eyeImp *valuesImp ~eyeLoad ~valuesLoad eyeGrid ^ ~eyeResult ~valuesResult - analysis abacus ^ | :: zoomOff cube cubeEdit -" />
      <span className="w-5" />
      <More />
    </div>
    <div className="flex h-7 items-center border-t border-[#e4e4e4] pl-px">
      <Tools items=":: node ^ line member ^ lineSet ^ - support ~lineSupport ~hinge - dimX ^ dimXX - ~surface ~^ ~shell ~^ ~opening ~^ ~solid ~^ ~solidBox - nodalLoad lineLoad memberLoad ~freeLoad memberImp ^ guide ^ | :: filterWin - ~portal ~film - ~moment ~contour ~cubeRes ~reaction ~ramp - ~result1 ~result2 ~result3 ~result4 ~result5 ~result6 - ~design ~^ | ::" />
      <label className="flex h-[21px] min-w-0 flex-1 items-center bg-[#e6e6f2] pl-[5px]">
        <span className="size-[11px] shrink-0 bg-[#ccffff]" />
        <select
          aria-label="Sistema de coordenadas"
          className="ml-[5px] min-w-0 flex-1 appearance-none bg-transparent outline-none"
        >
          <option>1 - XYZ global</option>
        </select>
        <Chevron />
      </label>
      <Tools items="axes - gridHand gridSnap *workPlane" />
      <More />
      <Tools items="| :: ruler ^" />
      <span className="w-px" />
      <More />
    </div>
  </div>
);

/* ---------- Navigator ---------- */

type Row = { level: 0 | 1 | 2; icon: string; text: string; open?: boolean };

const r = (level: 0 | 1 | 2, icon: string, text: string, open?: boolean): Row => ({
  level,
  icon,
  text,
  open,
});

const rows: Row[] = [
  r(0, "model", "001423_Imperfeccion.rf6", true),
  r(1, "folderOpen", "Objetos básicos", true),
  r(2, "materials", "Materiales", false),
  r(2, "sections", "Secciones", false),
  r(2, "node", "Nudos", false),
  r(2, "line", "Líneas", false),
  r(2, "member", "Barras", false),
  r(2, "lineSet", "Conjuntos de líneas"),
  r(2, "memberSet", "Conjuntos de barras"),
  r(1, "folder", "Objetos especiales", false),
  r(1, "folder", "Tipos para nudos", false),
  r(1, "folder", "Tipos para líneas", false),
  r(1, "folder", "Tipos para barras", false),
  r(1, "folderOpen", "Imperfecciones", true),
  r(2, "impCase", "Casos de imperfección", true),
  r(2, "case", "CI3"),
  r(2, "case", "CI4"),
  r(2, "impLocal", "Imperfecciones locales", false),
  r(1, "folderOpen", "Casos de carga y combinaciones", true),
  r(2, "load", "Casos de carga", false),
  r(2, "situation", "Situaciones de proyecto", false),
  r(2, "combination", "Combinaciones de carga", false),
  r(2, "config", "Configuración del análisis e", false),
  r(1, "folder", "Asistentes para cargas", false),
  r(1, "folderOpen", "Cargas", true),
  r(2, "folder", "CC1 - G", false),
  r(2, "folder", "CC2 - L", false),
  r(1, "folder", "Resultados", false),
  r(1, "folder", "Objetos auxiliares", false),
  r(1, "folder", "Informes"),
];

const indent = ["pl-0", "pl-5", "pl-10"];

const TreeRow = ({ row }: { row: Row }) => {
  if (row.icon === "case") {
    return (
      <li className="flex h-[18px] items-center pl-[83px]">
        <Badge />
        <span className="w-[3px]" />
        <Swatch />
        <span className="pl-[5px]">{row.text}</span>
      </li>
    );
  }

  const selected = row.icon === "impCase";

  return (
    <li className={`relative flex h-[18px] items-center whitespace-nowrap ${indent[row.level]}`}>
      <span className="flex w-5 shrink-0 justify-center">
        {row.open !== undefined && (
          <svg viewBox="0 0 10 10" className="size-2.5">
            <path
              d={row.open ? "M1 2.500l4 4 4-4" : "M3 1l4 4-4 4"}
              fill="none"
              stroke={row.open ? "#444" : "#a4a4a4"}
              strokeWidth="1.700"
            />
          </svg>
        )}
      </span>
      <span
        className={
          selected
            ? "flex h-[18px] w-[200px] items-center bg-[#cce8ff] outline-1 -outline-offset-1 outline-dotted outline-black"
            : "flex items-center"
        }
      >
        <span className="flex w-6 shrink-0 pl-[3px]">
          <TreeIcon name={row.icon} />
        </span>
        <span className={row.level === 0 ? "font-bold" : ""}>{row.text}</span>
      </span>
      {row.text === "Imperfecciones" && (
        <svg viewBox="0 0 39 16" className="absolute top-0.5 left-1 h-4 w-[39px]">
          <path d="M0 6h24V1l15 7-15 7v-5H0z" fill="#22d822" />
        </svg>
      )}
    </li>
  );
};

const Navigator = () => (
  <aside className="flex w-[317px] shrink-0 flex-col pl-px">
    <PanelHeader title="Navegador - Datos" />
    <div className="mt-px flex-1 overflow-hidden border-2 border-b-0 border-[#c8c8d4] bg-white">
      <div className="flex h-[18px] items-center">
        <span className="flex w-6 pl-[3px]">
          <TreeIcon name="brand" />
        </span>
        RFEM
      </div>
      <ul>
        {rows.map((row) => (
          <TreeRow key={row.text} row={row} />
        ))}
      </ul>
    </div>
    <div className="flex h-[27px] shrink-0 items-start border-b border-[#c8c8d4]">
      <button
        type="button"
        aria-label="Datos"
        className="flex h-[26px] w-10 items-center justify-center border-l-2 border-[#c8c8d4] bg-white"
      >
        <Icon name="models" />
      </button>
      <button
        type="button"
        aria-label="Mostrar"
        className="flex h-6 w-[38px] items-center justify-center border border-[#c8c8d4] bg-[#ebebeb]"
      >
        <Icon name="eye" />
      </button>
      <button
        type="button"
        aria-label="Vistas"
        className="flex h-6 w-10 items-center justify-center border border-[#c8c8d4] bg-[#ebebeb]"
      >
        <Icon name="camera" />
      </button>
      <span className="flex-1 border-t border-[#c8c8d4]" />
    </div>
  </aside>
);

/* ---------- Viewport ---------- */

const Column = () => (
  <svg viewBox="0 0 600 1470" className="absolute top-[63px] left-[398px] h-[490px] w-[200px]">
    {/* Base plate */}
    <path d="M115 1404L180 1396L210 1402L175 1420L125 1414z" fill="#48e048" stroke="#30c830" strokeWidth="3" />
    {/* Bow and sway areas beside the member */}
    <path d="M125 422Q-2 850 125 1290z" fill="#cce2e2" stroke="#3f9a9a" strokeWidth="3" />
    <path d="M277 74Q225 160 176 278V1280z" fill="#cce2e2" stroke="#3f9a9a" strokeWidth="3" />
    {/* Member */}
    <path d="M125 60L152 47L201 55V1404L172 1418L125 1410z" fill="#76c6f8" />
    <path d="M201 228L176 278V1280L201 965z" fill="#5cb2dc" />
    <path d="M125 60L152 47L201 55L172 66z" fill="#fff" stroke="#f8be20" strokeWidth="4" />
    <path
      d="M125 60V1410L172 1418L201 1404V55M152 47V1402M125 1410L152 1402L201 1404"
      fill="none"
      stroke="#f8be20"
      strokeWidth="4"
    />
    <path d="M174 66V1416" stroke="#a3bf8e" strokeWidth="4" />
    <path d="M200 228L176 278M277 74L176 1280" fill="none" stroke="#1a8a8a" strokeWidth="3" />
    <path d="M157 52l16 3-7 8-10-3z" fill="#e01010" />
    <path
      d="M175 58L277 73M66 720L125 728M176 736L220 743"
      stroke="#107a7a"
      strokeWidth="4"
      strokeDasharray="3 4"
    />
    <g fontFamily="Noto Sans, sans-serif" fontSize="32" fill="#007070">
      <text x="281" y="62">Φ</text>
      <text x="302" y="66">0</text>
      <text x="331" y="62">=</text>
      <text x="364" y="62">1/200.000</text>
      <text x="76" y="707">e</text>
      <text x="93" y="711">0</text>
      <text x="121" y="707">=</text>
      <text x="154" y="707">1/150.000</text>
    </g>
  </svg>
);

const ViewCube = () => (
  <svg viewBox="0 0 414 390" className="absolute top-[3px] right-px h-[130px] w-[138px]">
    <path d="M72 107L175 58L355 86L251 133z" fill="#b4b4b4" />
    <path d="M72 107L251 133V331L72 304z" fill="#dedede" />
    <path d="M251 133L355 86V285L251 331z" fill="#c6c6c6" />
    <path d="M157 103L207 76L286 88L232 114z" fill="#bcbcbc" />
    <path d="M200 98l34-4-14 12z" fill="#8c8cc4" />
    <g fill="none" stroke="#1c1c1c" strokeWidth="6">
      <path d="M72 158L251 184L355 138M72 256L251 282L355 236" />
      <path d="M117 114V311M205 127V324M277 122V320M328 98V297" />
      <path d="M117 114L217 65M205 127L305 78M100 94L277 122M146 72L328 98" />
    </g>
    <path
      d="M72 107L175 58L355 86V285L251 331L72 304zM72 107L251 133L355 86M251 133V331"
      fill="none"
      stroke="#333"
      strokeWidth="4"
    />
    <g fontFamily="Roboto, sans-serif" fontWeight="bold" fontSize="40">
      <text x="138" y="237" fill="#70e070">+Y</text>
      <text x="286" y="224" fontSize="34" fill="#f08080">-X</text>
    </g>
  </svg>
);

const Viewport = () => (
  <section className="relative min-h-0 flex-1 overflow-hidden bg-white pt-1 pl-[5px] leading-[17px]">
    <p>CO3 - 1.35 * CC1 + 1.50 * CC2</p>
    <p>Cargas [kN], [kN/m]</p>
    <Column />
    <ViewCube />
  </section>
);

/* ---------- Table panel ---------- */

const cell = "h-4 border-r border-b border-[#dcdcdc] p-0";
const head = "border-r border-b border-[#cfcfcf] bg-[#f0f0f0] p-0 font-normal";

const cases = [
  { id: "CI1" },
  { id: "CI2" },
  { id: "CI3", combo: "1" },
  { id: "CI4", combo: "2" },
  { id: "CI5" },
];

const Check = ({ id }: { id: string }) => (
  <span className="relative mx-auto flex size-[13px]">
    <input
      type="checkbox"
      defaultChecked
      aria-label={`${id} está activo`}
      className="size-[13px] appearance-none border border-[#222] bg-white"
    />
    <svg viewBox="0 0 13 13" className="pointer-events-none absolute inset-0 size-[13px]">
      <path d="M2.500 6.500l3 3L11 4" fill="none" stroke="#333" strokeWidth="1.200" />
    </svg>
  </span>
);

const CasesTable = () => (
  <table className="w-[1230px] table-fixed border-separate border-spacing-0 text-center leading-[13px]">
    <colgroup>
      <col className="w-[60px]" />
      <col className="w-[200px]" />
      <col className="w-[60px]" />
      <col className="w-[110px]" />
      <col className="w-[110px]" />
      <col className="w-[270px]" />
      <col className="w-[210px]" />
      <col className="w-[210px]" />
    </colgroup>
    <thead>
      <tr>
        {[0, 1, 2, 3, 4, 5, 6, 7].map((i) => (
          <td key={i} className="h-2.5 border-r border-b border-white bg-[#e0e0e0] p-0" />
        ))}
      </tr>
      <tr>
        <th rowSpan={2} className="border-r border-b border-[#cfcfcf] bg-[#e0e0e0] p-0 pb-px align-bottom font-normal">
          Caso de
          <br />
          imperf.
        </th>
        <th rowSpan={2} className={`${head} pb-px align-bottom`}>Nombre del caso de imperfección</th>
        <th rowSpan={2} className={`${head} pb-px align-bottom`}>
          Está
          <br />
          activo
        </th>
        <th colSpan={2} className="h-4 border-r border-[#cfcfcf] bg-[#f0f0f0] p-0 font-normal">Asignado a</th>
        <th rowSpan={2} className={`${head} pb-px align-bottom`}>Tipo de imperfección</th>
        <th rowSpan={2} className={`${head} pb-px align-bottom`}>Tipo de origen</th>
        <th rowSpan={2} className={`${head} pb-px pl-[54px] text-left align-bottom`}>Orig</th>
      </tr>
      <tr>
        <th className={`h-4 ${head}`}>Casos de carga</th>
        <th className={`h-4 ${head}`}>Combinac. de carga</th>
      </tr>
    </thead>
    <tbody>
      {cases.map((c) => (
        <tr key={c.id}>
          <th className="h-4 border-r border-b border-[#f4f4f4] bg-[#e0e0e0] p-0 font-normal">{c.id}</th>
          <td className={cell}>
            {c.id === "CI1" && (
              <input
                aria-label="Nombre de CI1"
                className="mx-px block h-[15px] w-[197px] border border-dotted border-black bg-white outline-none"
              />
            )}
          </td>
          <td className={cell}>{c.combo && <Check id={c.id} />}</td>
          <td className={cell} />
          <td className={`${cell} pl-1 text-left`}>{c.combo}</td>
          <td className={`${cell} pl-1 text-left`}>
            {c.combo && (
              <span className="flex items-center gap-[5px]">
                <Badge />
                Imperfecciones locales
              </span>
            )}
          </td>
          <td className={`${cell} bg-[#f9faf3]`} />
          <td className={`${cell} bg-[#f9faf3]`} />
        </tr>
      ))}
    </tbody>
  </table>
);

const ScrollButton = ({ d, label }: { d: string; label: string }) => (
  <button type="button" aria-label={label} className="flex size-4 shrink-0 items-center justify-center">
    <svg viewBox="0 0 8 8" className="size-2">
      <path d={d} fill="none" stroke="#505050" strokeWidth="1.800" />
    </svg>
  </button>
);

const PageButton = ({ d, label, dark }: { d: string; label: string; dark?: boolean }) => (
  <button type="button" aria-label={label} className="flex w-[18px] justify-center">
    <svg viewBox="0 0 8 8" className="size-2">
      <path d={d} fill={dark ? "#333" : "#888"} />
    </svg>
  </button>
);

const TablePanel = () => (
  <section className="shrink-0 border-t border-[#f7f7f7]">
    <PanelHeader title="Casos de imperfección" />
    <nav className="flex h-5 items-center gap-4 pl-[7px]">
      {["Ir a", "Edición", "Selección", "Ver", "Configuración"].map((menu) => (
        <button type="button" key={menu}>{menu}</button>
      ))}
    </nav>
    <div className="flex h-[26px] items-center border-t border-[#e4e4e4] pl-0.5">
      <label className="mr-px flex h-[21px] w-[158px] shrink-0 items-center bg-[#e6e6f2]">
        <Icon name="impTable" />
        <select aria-label="Categoría" className="min-w-0 flex-1 appearance-none bg-transparent outline-none">
          <option>Imperfecciones</option>
        </select>
        <Chevron />
      </label>
      <Arrow dir="left" />
      <span className="w-px" />
      <Arrow dir="right" />
      <Sep />
      <Edge />
      <CaseSelect />
      <Arrow dir="left" disabled />
      <span className="w-px" />
      <Arrow dir="right" />
      <Tools items="- newImp editImp - *syncIn *syncOut - ~tblHeader ~tblGraph ~tblPlus ~tblCross ~tblDots - ~tblClear - ~rowInsert ~rowDelete ~rowLeft ~rowRight - split - abEq fx ~fxOff fxEye - excel - basicData | units" />
      <span className="w-1" />
      <More />
    </div>
    <div className="border border-r-0 border-[#c8c8d4]">
      <div className="flex h-[111px]">
        <div className="min-w-0 flex-1 overflow-hidden bg-white">
          <CasesTable />
        </div>
        <div className="flex w-[17px] flex-col items-center bg-[#f0f0f0]">
          <ScrollButton label="Subir" d="M1 6l3-4 3 4" />
          <span className="h-[38px] w-[15px] bg-[#cdcdcd]" />
          <span className="flex-1" />
          <ScrollButton label="Bajar" d="M1 2l3 4 3-4" />
        </div>
      </div>
      <div className="mr-[17px] flex h-4 items-center bg-[#f0f0f0]">
        <ScrollButton label="Izquierda" d="M6 1L2 4l4 3" />
        <span className="h-[15px] w-[65%] bg-[#cdcdcd]" />
        <span className="flex-1" />
        <ScrollButton label="Derecha" d="M2 1l4 3-4 3" />
      </div>
    </div>
    <div className="flex h-[23px] items-start">
      <div className="flex h-[22px] w-[127px] items-center">
        <PageButton label="Primera" d="M0 0h1.500v8H0zM7 0v8L2 4z" />
        <PageButton label="Anterior" d="M6 0v8L2 4z" />
        <span className="flex-1 text-center">1 de 3</span>
        <PageButton label="Siguiente" d="M2 0v8l4-4z" dark />
        <PageButton label="Última" d="M6 0h1.500v8H6zM1 0v8l5-4z" dark />
      </div>
      <button type="button" className="h-[22px] w-[133px] shrink-0 border border-t-0 border-[#c8c8d4] bg-white">
        Casos de imperfección
      </button>
      <button
        type="button"
        className="h-5 w-[143px] shrink-0 border border-t-0 border-l-0 border-[#c8c8d4] bg-[#ebebeb]"
      >
        Imperfecciones de barras
      </button>
      <button type="button" className="h-5 w-[216px] shrink-0 border border-t-0 border-[#c8c8d4] bg-[#ebebeb]">
        Imperfecciones de conjuntos de barras
      </button>
    </div>
  </section>
);

/* ---------- Status bar ---------- */

const pressed = "h-[19px] border-t border-l border-[#bcbcbc] bg-[#ebebeb] px-[3px]";
const field = "h-[18px] border-l border-[#d6d6d6] pl-1 leading-5";

const StatusBar = () => (
  <footer className="flex h-[23px] shrink-0 items-center pl-1.5">
    <p className="w-[558px] shrink-0">Define un nuevo caso de imperfección mediante el cuadro de diálogo.</p>
    <button type="button" className={`${pressed} w-[43px]`}>FORZC</button>
    <button type="button" className="w-[49px]">REJILLA</button>
    <button type="button" className="w-[43px]">REJLIN</button>
    <button type="button" className={`${pressed} w-[47px]`}>REFENT</button>
    <span className="h-[18px] w-[117px] border-x border-[#d6d6d6]" />
    <span className="h-[18px] flex-1" />
    <span className={`${field} w-[156px]`}>SC: XYZ global</span>
    <span className={`${field} w-[66px]`}>Plano: XY</span>
    <span className={`${field} w-[76px]`} />
    <span className={`${field} w-[76px]`} />
    <span className={`${field} w-[77px] border-r`} />
    <svg viewBox="0 0 18 16" className="h-4 w-[18px] self-end">
      <path
        d="M14 4h2v2h-2zM10 8h2v2h-2zM14 8h2v2h-2zM6 12h2v2H6zM10 12h2v2h-2zM14 12h2v2h-2z"
        fill="#b8b8b8"
      />
    </svg>
  </footer>
);

/* ---------- Context menu ---------- */

type Action = { icon: string; text: string; hint?: string; active?: boolean };

const groups: Action[][] = [
  [
    { icon: "editImp", text: "Edición...", hint: "Intro" },
    { icon: "newImp", text: "Nuevo caso de imperfección...", active: true },
    { icon: "tableImp", text: "Ir a la tabla" },
  ],
  [{ icon: "deleteImp", text: "Eliminar todo", hint: "Supr" }],
  [
    { icon: "basicData", text: "Datos básicos..." },
    { icon: "units", text: "Unidades y decimales..." },
  ],
  [{ icon: "display", text: "Propiedades de visualización..." }],
  [
    { icon: "expand", text: "Expandir a predeterminado" },
    { icon: "collapse", text: "Contraer todo" },
  ],
];

const ContextMenu = () => (
  <div
    role="menu"
    className="absolute top-[411px] left-[229px] w-[257px] border border-[#c4c4c4] bg-[#f6f6f6] py-[3px] pr-1 pl-0.5 shadow-[2px_2px_2px_rgba(0,0,0,0.55)]"
  >
    {groups.map((group, i) => (
      <div key={i}>
        {i > 0 && (
          <div className="ml-7 h-[9px] pt-[3px]">
            <div className="h-px bg-[#d6d6d6]" />
          </div>
        )}
        {group.map((action) => (
          <button
            key={action.text}
            type="button"
            role="menuitem"
            className={
              action.active
                ? "flex h-[22px] w-full items-center bg-[#91c9f7] text-left"
                : "flex h-[22px] w-full items-center text-left"
            }
          >
            <Icon name={action.icon} />
            <span className="flex-1 pl-2">{action.text}</span>
            {action.hint && <span className="w-10">{action.hint}</span>}
          </button>
        ))}
      </div>
    ))}
  </div>
);

const App = () => (
  <div className="relative flex h-screen flex-col overflow-hidden border-x border-[#0078d7] bg-[#f7f7f7] font-['Open_Sans',sans-serif] text-[11px] leading-[16px] whitespace-nowrap text-black">
    <TitleBar />
    <MenuBar />
    <Toolbars />
    <div className="flex min-h-0 flex-1">
      <Navigator />
      <main className="flex min-w-0 flex-1 flex-col pl-1">
        <Viewport />
        <TablePanel />
      </main>
    </div>
    <StatusBar />
    <ContextMenu />
  </div>
);

export default App;
